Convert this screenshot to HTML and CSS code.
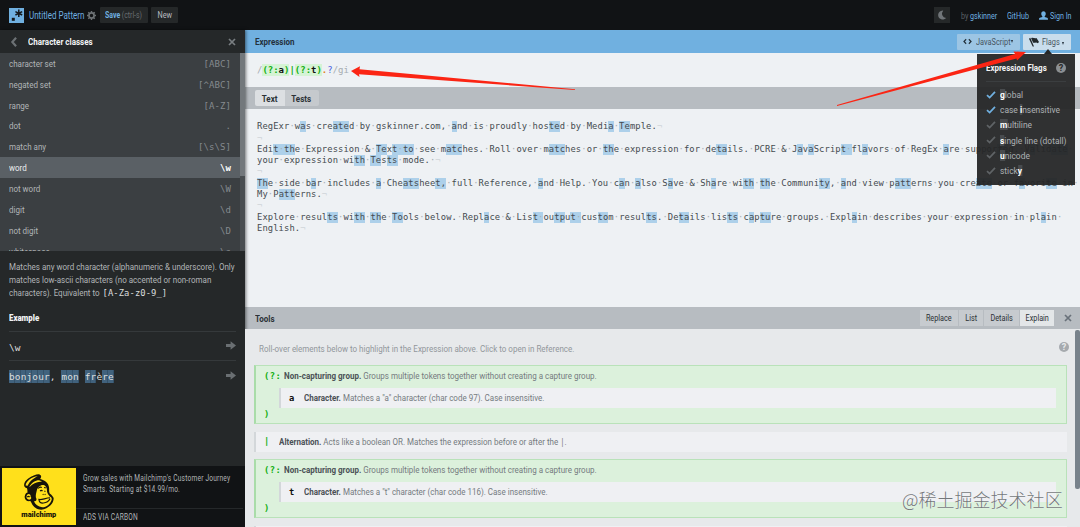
FILE: index.html
```html
<!DOCTYPE html>
<html lang="en">
<head>
<meta charset="utf-8">
<title>RegExr</title>
<link rel="stylesheet" href="styles.css">
</head>
<body>
<div class="app">
  <header class="top">
    <svg class="logo" viewBox="0 0 15 15"><rect width="15" height="15" fill="#70b0e0"/><rect x="2.8" y="9.8" width="3" height="3" fill="#14181b"/><path d="M9.8 1.6v7.4M6.4 3.6l6.8 3.4M13.2 3.6L6.4 7" stroke="#14181b" stroke-width="1.5"/></svg>
    <span class="title"><span class="t">Untitled Pattern</span></span>
    <svg class="gear" viewBox="0 0 16 16"><circle cx="8" cy="8" r="4.6" fill="none" stroke="#6d7275" stroke-width="3"/><path d="M8 0v3M8 13v3M0 8h3M13 8h3M2.3 2.3l2.2 2.2M11.5 11.5l2.2 2.2M2.3 13.7l2.2-2.2M11.5 4.5l2.2-2.2" stroke="#6d7275" stroke-width="2.6"/></svg>
    <span class="btn save"><span class="t"><b>Save</b> <i>(ctrl-s)</i></span></span>
    <span class="btn new"><span class="t">New</span></span>
    <span class="grow"></span>
    <span class="moon"><svg viewBox="0 0 16 16"><path d="M10 1A7.200 7.200 0 1 0 14.500 12.800A7 7 0 0 1 10 1z" fill="#707579"/></svg></span>
    <span class="by"><span class="t"><i>by</i> gskinner</span></span>
    <span class="gh"><span class="t">GitHub</span></span>
    <svg class="user" viewBox="0 0 16 16"><path d="M8 0.500c2.500 0 4 1.800 4 4.300 0 2-.8 3.600-1.900 4.500v1.200l4.400 1.700c1 .4 1.500 1.200 1.500 3.300H0c0-2.100.5-2.900 1.500-3.300l4.400-1.700V9.300C4.800 8.400 4 6.800 4 4.800 4 2.300 5.500.5 8 .5z" fill="#70b0e0"/></svg>
    <span class="sign"><span class="t">Sign In</span></span>
  </header>

  <aside class="side">
    <div class="side-head">
      <svg class="back" viewBox="0 0 8 12"><path d="M6.500 1L2 6l4.500 5" fill="none" stroke="#6c7174" stroke-width="2.600"/></svg>
      <b class="t">Character classes</b>
      <svg class="x" viewBox="0 0 8 8"><path d="M1 1l6 6M7 1L1 7" stroke="#797e81" stroke-width="1.700"/></svg>
    </div>
    <div class="list">
      <div class="row"><span class="t">character set</span><code>[ABC]</code></div>
      <div class="row"><span class="t">negated set</span><code>[^ABC]</code></div>
      <div class="row"><span class="t">range</span><code>[A-Z]</code></div>
      <div class="row"><span class="t">dot</span><code>.</code></div>
      <div class="row"><span class="t">match any</span><code>[\s\S]</code></div>
      <div class="row on"><span class="t">word</span><code>\w</code></div>
      <div class="row"><span class="t">not word</span><code>\W</code></div>
      <div class="row"><span class="t">digit</span><code>\d</code></div>
      <div class="row"><span class="t">not digit</span><code>\D</code></div>
      <div class="row"><span class="t">whitespace</span><code>\s</code></div>
      <i class="bar"></i>
    </div>
    <div class="desc">
      <p><span class="t">Matches any word character (alphanumeric &amp; underscore). Only</span></p>
      <p><span class="t">matches low-ascii characters (no accented or non-roman</span></p>
      <p class="mix"><span class="t">characters). Equivalent to</span><code>[A-Za-z0-9_]</code></p>
      <h4><b class="t">Example</b></h4>
      <div class="ex"><code>\w</code><svg viewBox="0 0 12 10"><path d="M0 3.200h5.500V0L12 5l-6.500 5V6.800H0z" fill="#6a6f72"/></svg></div>
      <div class="ex"><code class="hl"><i>b</i><i>o</i><i>n</i><i>j</i><i>o</i><i>u</i><i>r</i>, <i>m</i><i>o</i><i>n</i> <i>f</i><i>r</i>è<i>r</i><i>e</i></code><svg viewBox="0 0 12 10"><path d="M0 3.200h5.500V0L12 5l-6.500 5V6.800H0z" fill="#6a6f72"/></svg></div>
    </div>
    <div class="ad">
      <div class="chimp">
        <svg viewBox="0 0 94 114">
          <path d="M12 46C-2 44 2 26 16 17 30 6 50 0 52 6c5 2 3 8 0 12 14 4 26 12 27 26 1 8-1 12 2 18 6 4 10 10 12 14 0 14-9 24-22 31-14 8-32 5-42-10-3-5-4-9-7-12C10 88 2 76 6 68c1-6 5-8 8-9-1-5 0-8-2-13z" fill="#17140a"/>
          <path d="M8 38C8 26 26 11 45 9 34 15 20 24 14 39zM19 42C25 30 38 22 48 22c5 1 8 3 10 5-12-3-28 4-37 15z" fill="#ffe01b"/>
          <path d="M11 70c1-9 14-8 12 2 4 3 2 8-4 9-6 0-10-5-8-11z" fill="#ffe01b"/>
          <path d="M42 52c3-10 14-19 24-14 6 4 7 12 7 19 1 6 5 9 8 14 5 2 7 5 6 10-3 11-15 23-29 23-12-1-21-8-25-18 8 0 10-6 6-12-1-8 1-14 3-22z" fill="#ffe01b"/>
          <path d="M46 47c3-4 7-5 11-3M64 44l5 1M52 55c2-3 5-3 7 0M65 55l3 1M47 80c9 3 20-4 35-5M48 78c0 10 5 14 14 13 9-1 16-5 20-13M13 73c2-3 5-3 7 0M60 64l2 2M66 64l2 2" fill="none" stroke="#17140a" stroke-width="3.500"/>
        </svg>
        <b>mailchimp</b>
      </div>
      <div class="adtext">
        <p><span class="t">Grow sales with Mailchimp's Customer Journey</span></p>
        <p><span class="t">Smarts. Starting at $14.99/mo.</span></p>
        <p class="via"><span class="t">ADS VIA CARBON</span></p>
      </div>
    </div>
  </aside>

  <main class="main">
    <div class="bar-blue">
      <b class="t">Expression</b><span class="grow"></span>
      <span class="hb js"><svg viewBox="0 0 12 8"><path d="M4.200 1L1.300 4l2.900 3M7.800 1l2.900 3-2.900 3" fill="none" stroke="#24313c" stroke-width="1.600"/></svg><span class="t">JavaScript</span><i class="car"></i></span>
      <span class="hb fl"><svg viewBox="0 0 12 12"><path d="M0 2L1.500 1 6 11.500H4.400zM2.500 1.500C5 0 6.500 2.500 9 1.300L12 6 10.500 7.500C8.500 5.500 7 7.500 5 6.800z" fill="#22282c"/></svg><span class="t">Flags</span><i class="car"></i></span>
    </div>
    <div class="expr"><code><i class="d">/</i><i class="g">(?:</i><i class="k">a</i><i class="g">)</i><i class="p">|</i><i class="g">(?:</i><i class="k">t</i><i class="g">)</i><i class="o">.</i><i class="q">?</i><i class="d">/gi</i></code></div>
    <div class="tabs"><span class="tab on"><b class="t">Text</b></span><span class="tab"><b class="t">Tests</b></span></div>
    <pre class="editor" id="editor"></pre>
    <div class="toolbar">
      <b class="t">Tools</b><span class="grow"></span>
      <span class="tb w1"><span class="t">Replace</span></span><span class="tb w2"><span class="t">List</span></span><span class="tb w3"><span class="t">Details</span></span><span class="tb w4 on"><span class="t">Explain</span></span>
      <svg class="x" viewBox="0 0 8 8"><path d="M1 1l6 6M7 1L1 7" stroke="#69717a" stroke-width="1.700"/></svg>
    </div>
    <div class="tools">
      <div class="hint"><span class="t">Roll-over elements below to highlight in the Expression above. Click to open in Reference.</span><span class="help">?</span></div>
      <div class="grp">
        <div class="gl"><code>(?:</code><span class="t"><b>Non-capturing group.</b> Groups multiple tokens together without creating a capture group.</span></div>
        <div class="item"><code>a</code><span class="t"><b>Character.</b> Matches a "a" character (char code 97). Case insensitive.</span></div>
        <div class="gc"><code>)</code></div>
      </div>
      <div class="item alt"><code>|</code><span class="t"><b>Alternation.</b> Acts like a boolean OR. Matches the expression before or after the <code>|</code>.</span></div>
      <div class="grp">
        <div class="gl"><code>(?:</code><span class="t"><b>Non-capturing group.</b> Groups multiple tokens together without creating a capture group.</span></div>
        <div class="item"><code>t</code><span class="t"><b>Character.</b> Matches a "t" character (char code 116). Case insensitive.</span></div>
        <div class="gc"><code>)</code></div>
      </div>
      <div class="item alt"></div>
      <i class="bar"></i>
    </div>
  </main>

  <div class="menu">
    <div class="mh"><b class="t">Expression Flags</b><span class="help">?</span></div>
    <div class="opt on"><svg viewBox="0 0 12 10"><path d="M1 5.200l3.300 3L11 1.200"/></svg><span class="t"><b>g</b>lobal</span></div>
    <div class="opt on"><svg viewBox="0 0 12 10"><path d="M1 5.200l3.300 3L11 1.200"/></svg><span class="t">case <b>i</b>nsensitive</span></div>
    <div class="opt"><svg viewBox="0 0 12 10"><path d="M1 5.200l3.300 3L11 1.200"/></svg><span class="t"><b>m</b>ultiline</span></div>
    <div class="opt"><svg viewBox="0 0 12 10"><path d="M1 5.200l3.300 3L11 1.200"/></svg><span class="t"><b>s</b>ingle line (dotall)</span></div>
    <div class="opt"><svg viewBox="0 0 12 10"><path d="M1 5.200l3.300 3L11 1.200"/></svg><span class="t"><b>u</b>nicode</span></div>
    <div class="opt"><svg viewBox="0 0 12 10"><path d="M1 5.200l3.300 3L11 1.200"/></svg><span class="t">stick<b>y</b></span></div>
  </div>
  <svg class="arrows" viewBox="0 0 1080 527"><path d="M351 71L360 66.300 359.500 69.300 575 89.200 575 90 359 74.300 359.500 77zM1026 52L1013.500 51.500 1015 54 837 105 837 106 1016.500 58.500 1017 60.500z" fill="#fb2514"/></svg>
  <div class="mark">@稀土掘金技术社区</div>
</div>
<script src="script.js"></script>
</body>
</html>
```
FILE: styles.css
```css
* { box-sizing: border-box; }
body { margin: 0; background: #111315; }
i { font-style: normal; }
p, h4, pre { margin: 0; }
svg { display: block; flex: none; }
code, pre { font-family: "DejaVu Sans Mono", monospace; font-size: 8.8px; letter-spacing: .1px; white-space: pre; }
.app { position: relative; width: 1080px; height: 527px; overflow: hidden; display: grid; grid-template: 30px 497px / 245px 835px; font: 9.8px Roboto, sans-serif; }
.t { display: inline-block; white-space: nowrap; transform: scaleX(var(--k, .817)); transform-origin: 0 50%; }
.grow { flex: 1; }

.top { grid-column: 1 / 3; display: flex; align-items: center; background: #111315; color: #70b0e0; padding-left: 9px; }
.logo { width: 15px; height: 15px; }
.title { width: 58px; margin-left: 5px; font-size: 10.200px; --k: .785; }
.gear { width: 9px; height: 9px; }
.btn { height: 16px; background: #252829; border-radius: 1px; display: flex; align-items: center; justify-content: center; color: #b9bdc0; font-size: 8.8px; --k: .785; }
.btn .t, .tb .t, .tab .t { transform-origin: 50% 50%; }
.btn b { color: #70b0e0; }
.btn i { color: #696e71; }
.save { width: 48px; margin-left: 4px; }
.new { width: 27px; margin-left: 3px; --k: .83; }
.moon { width: 16px; height: 16px; background: #252829; display: grid; place-items: center; margin-right: 11px; }
.moon svg { width: 10px; height: 10px; }
.by { width: 46px; }
.by, .gh, .sign { font-size: 9.200px; --k: .775; }
.by i { color: #5c6265; }
.gh { width: 32px; }
.user { width: 9px; height: 9px; margin-right: 2px; }
.sign { width: 30px; }

.side { background: #252829; color: #b1b5b7; display: grid; grid-template: 23px 198px 1fr 61px / minmax(0, 1fr); box-shadow: 1px 0 3px rgba(0,0,0,.5); position: relative; }
.side-head { display: flex; align-items: center; color: #f2f4f5; padding: 0 9px 0 10px; --k: .82; }
.back { width: 8px; height: 10px; margin-right: 10px; }
.x { width: 8px; height: 8px; margin-left: auto; }
.list { background: #3b3f42; overflow: hidden; position: relative; }
.row { height: 20.85px; display: flex; align-items: center; justify-content: space-between; padding: 0 14px 0 9px; }
.row code { color: #858a8e; font-size: 9px; padding-top: 1px; }
.row.on { background: #5a6065; color: #eceeef; }
.row.on code { color: #fff; font-weight: 700; }
.bar { position: absolute; right: 0; top: 0; width: 5px; height: 123px; background: #73787c; }
.list::after { content: ""; position: absolute; right: 0; top: 123px; bottom: 0; width: 5px; background: #4a4e51; }
.desc { padding: 9px 9px 0; }
.desc p { height: 12.75px; line-height: 14px; }
.mix { display: flex; }
.mix .t { width: 93.500px; }
.mix code { color: #dcdedf; font-size: 8.8px; }
.desc h4 { color: #f2f4f5; height: 33.500px; padding-top: 14px; font-size: 9.6px; border-bottom: 1px solid #35393b; }
.ex { height: 29px; display: flex; align-items: center; justify-content: space-between; color: #dcdedf; border-bottom: 1px solid #35393b; }
.ex:last-child { border: 0; }
.ex svg { width: 10px; height: 9px; }
.ex code { font-size: 9.5px; padding-top: 3px; }
.hl i { background: #41627d; box-shadow: inset -1px 0 #34526a; padding: 1px 0; }
.ad { background: #111315; display: flex; padding: 2px; }
.chimp { flex: none; width: 73.500px; height: 57px; background: #ffe01b; display: flex; flex-direction: column; align-items: center; color: #17140a; }
.chimp svg { width: 31px; height: 37.600px; margin-top: 5px; }
.chimp b { font: 900 7.4px/8px Roboto, sans-serif; margin-top: 0; }
.adtext { flex: 1; min-width: 0; font-size: 8.200px; letter-spacing: .25px; --k: .805; }
.adtext p { padding-left: 7px; line-height: 10.800px; white-space: nowrap; }
.adtext p:first-child { padding-top: 5px; }
.adtext .via { margin-top: 13.500px; border-top: 1px solid #25282a; line-height: 16px; }

.main { display: grid; grid-template: 23px 34px 22px 198px 22px 198px / minmax(0, 1fr); min-width: 0; }
.bar-blue { background: #70b0e0; color: #24313c; display: flex; align-items: center; padding: 0 9px 0 9.500px; }
.hb { height: 16px; display: flex; align-items: center; background: #9cc5e4; border-radius: 1px; color: #46535e; font-size: 9.400px; --k: .785; }
.js { width: 63px; padding-left: 6px; margin-right: 3px; }
.js svg { width: 9px; height: 7px; margin-right: 4px; }
.js .t { width: 34.500px; }
.fl { width: 48px; background: #c9ddec; padding-left: 6px; }
.fl svg { width: 10px; height: 10px; margin-right: 3px; }
.fl .t { width: 19.500px; }
.car { border: 1.500px solid transparent; border-top: 3px solid #24313c; border-bottom: 0; }
.fl .car { margin-top: 4px; }
.expr { background: #eef1f4; padding: 11px 0 0 12px; }
.expr code { font-size: 9px; letter-spacing: -.02px; }
.expr i { display: inline-block; height: 12px; line-height: 12px; }
.d { color: #a5abb0; }
.g, .k, .p { font-weight: 700; }
.g { color: #0fae0f; background: #d5f3d5; }
.k { color: #111; background: #d5f3d5; }
.p { color: #0fae0f; }
.o { color: #e08419; font-weight: 700; }
.q { color: #4a5ce0; }
.tabs { background: #b7bcc1; display: flex; padding: 3px 9.500px; color: #2b3136; }
.tab { width: 34px; height: 16px; display: grid; place-items: center; background: #c5c9cd; border-radius: 0 2px 2px 0; }
.tab.on { width: 30px; background: #dcdfe2; border-radius: 2px 0 0 2px; }
.editor { background: #eef1f4; color: #454b50; padding: 12.300px 0 0 12px; line-height: 11.280px; letter-spacing: .105px; overflow: hidden; }
.editor mark { background: #add0ea; color: inherit; padding: 0 0 1px; }
.editor s { color: #a9b0b5; text-decoration: none; }
.editor u { color: #d0d5d9; text-decoration: none; }
.toolbar { background: #b7bcc1; display: flex; align-items: center; padding: 0 8px 0 9.500px; color: #2b3136; }
.tb { height: 16px; display: grid; place-items: center; background: #c7cbcf; border-right: 1px solid #b7bcc1; font-size: 8.900px; }
.w1 { width: 39px; } .w2 { width: 25px; } .w3 { width: 36px; } .w4 { width: 35px; }
.tb.on { background: #e3e6e8; }
.toolbar .x { margin-left: 9px; }
.tools { background: #e7e9eb; padding: 0 13px 0 9px; position: relative; overflow: hidden; color: #757b7f; }
.hint { height: 36px; display: flex; align-items: center; justify-content: space-between; padding: 2px 0 0 5px; color: #92979b; margin-right: -2px; }
.help { flex: none; width: 10px; height: 10px; border-radius: 50%; background: #a6aaae; color: #e7e9eb; font: 700 9px/10px Roboto, sans-serif; text-align: center; }
.hint .help { margin-bottom: 3px; }
.grp { height: 59px; background: #dcf1dc; border: 1px solid #b9e2b9; border-left: 2px solid #a9dca9; margin-bottom: 7.500px; padding-left: 8px; }
.gl { height: 22px; display: flex; align-items: center; padding-bottom: 3px; }
.gl code { width: 20px; letter-spacing: .5px; }
.gl code, .gc code, .item.alt > code { color: #0fae0f; font-weight: 700; }
.tools b { color: #4b5156; }
.item { height: 20px; background: #eff0f3; border-left: 2px solid #d3d7da; display: flex; align-items: center; margin: 0 10px 0 15px; padding: 0 0 1px 8px; }
.item > code { width: 15px; color: #111; font-weight: 700; }
.item.alt { margin: 0 0 7.500px; }
.gc { line-height: 12px; }
.tools .bar { top: 1px; height: 159px; background: #78828b; border-radius: 2px; }

.menu { position: absolute; left: 977px; top: 54px; width: 98px; height: 131px; background: rgba(37,38,39,.95); color: #aeb2b4; padding: 0 9px; --k: .86; }
.menu::before { content: ""; position: absolute; left: 67px; top: -5px; border: 4px solid transparent; border-top: 0; border-bottom: 5px solid #252627; }
.mh { height: 28px; display: flex; align-items: center; justify-content: space-between; border-bottom: 1px solid #3b3e40; margin-bottom: 5px; color: #f4f5f6; font-size: 9.600px; --k: .83; }
.mh .t { width: 64px; }
.mh .help { background: #8b8f92; color: #252627; }
.opt { height: 15.200px; display: flex; align-items: center; }
.opt svg { width: 10px; height: 8px; margin-right: 4px; fill: none; stroke: #5f6366; stroke-width: 2.200; }
.opt.on svg { stroke: #70b0e0; }
.opt b { color: #fff; background: #484b4e; }
.arrows { position: absolute; inset: 0; width: 1080px; height: 527px; pointer-events: none; }
.mark { position: absolute; left: 902px; top: 486px; font: 18.050px/26px "Noto Sans CJK SC", sans-serif; font-weight: 300; color: #73777a; white-space: nowrap; text-shadow: 0 0 1px #fff; }
```
FILE: script.js
```javascript
const lines = [
  "RegExr was created by gskinner.com, and is proudly hosted by Media Temple.\n",
  "\n",
  "Edit the Expression & Text to see matches. Roll over matches or the expression for details. PCRE & JavaScript flavors of RegEx are supported. Validate ",
  "your expression with Tests mode. \n",
  "\n",
  "The side bar includes a Cheatsheet, full Reference, and Help. You can also Save & Share with the Community, and view patterns you create or favorite in ",
  "My Patterns.\n",
  "\n",
  "Explore results with the Tools below. Replace & List output custom results. Details lists capture groups. Explain describes your expression in plain ",
  "English.\n"
];
// Visible markers for spaces and line ends
const show = s => s.replace(/&/g, "&amp;").replace(/ /g, "<s>·</s>").replace(/\n/g, "<u>¬</u>");
document.getElementById("editor").innerHTML = lines.map(line => {
  let out = "", last = 0;
  for (const m of line.matchAll(/(?:a)|(?:t).?/gi)) {
    out += show(line.slice(last, m.index)) + "<mark>" + show(m[0]) + "</mark>";
    last = m.index + m[0].length;
  }
  return out + show(line.slice(last));
}).join("\n");
```
